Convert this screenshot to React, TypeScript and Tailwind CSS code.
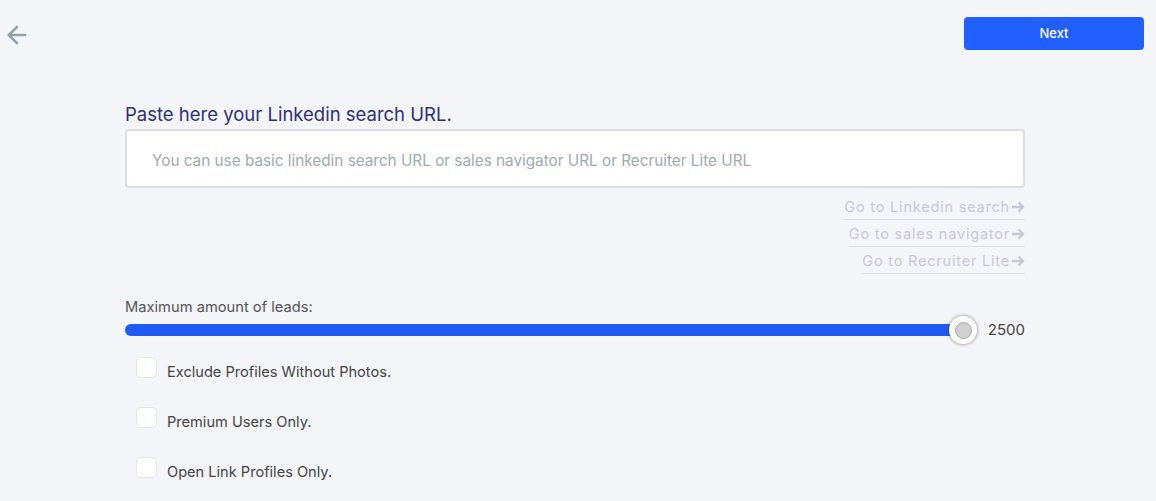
import { ArrowLeft } from "lucide-react";

const LINKS = ["Go to Linkedin search", "Go to sales navigator", "Go to Recruiter Lite"];
const OPTIONS = ["Exclude Profiles Without Photos.", "Premium Users Only.", "Open Link Profiles Only."];

function LinkArrow() {
  return (
    <svg width="14" height="14" viewBox="0 0 14 14" className="ml-[1px]">
      <path d="M1 7h11M7.5 2.5L12 7l-4.5 4.5" fill="none" stroke="currentColor" strokeWidth="2.4" strokeLinecap="butt" />
    </svg>
  );
}

export default function App() {
  const value = 2500;
  const max = 2500;
  const pct = (value / max) * 100;

  return (
    <div className="relative h-[501px] w-full overflow-hidden bg-[#f4f5f9] font-['Inter',sans-serif]">
      <div className="flex items-start justify-between pl-[3px] pr-[12px] pt-[17px]">
        <button type="button" className="mt-[4px] text-[#8fa3a8]" aria-label="Back">
          <ArrowLeft className="h-[28px] w-[28px]" strokeWidth={2.2} />
        </button>
        <button
          type="button"
          className="h-[33px] w-[180px] rounded-[4px] bg-[#2160ff] pt-[1px] text-[13px] font-medium text-white"
        >
          Next
        </button>
      </div>

      <div className="mt-[52px] w-[900px]" style={{ marginLeft: 125 }}>
        <h2 className="text-[18.5px] leading-[24px] text-[#2d3079]">Paste here your Linkedin search URL.</h2>
        <input
          type="text"
          placeholder="You can use basic linkedin search URL or sales navigator URL or Recruiter Lite URL"
          className="mt-[3px] h-[59px] w-full rounded-[4px] border-2 border-[#dcdce8] bg-white px-[25px] pt-[3px] text-[15.3px] text-[#444] outline-none placeholder:text-[#9eabad]"
        />

        <div className="mt-[9px] flex flex-col items-end gap-[4px]">
          {LINKS.map((link) => (
            <a
              key={link}
              href="#"
              className="flex items-center border-b border-[#dfe0ea] pb-[2px] text-[14.5px] leading-[20px] tracking-[0.8px] text-[#c6c8d8]"
            >
              {link}
              <LinkArrow />
            </a>
          ))}
        </div>

        <div className="mt-[24px]">
          <p className="text-[14.7px] leading-[18px] text-[#555]">Maximum amount of leads:</p>
          <div className="mt-[0px] flex items-center">
            <div className="relative h-[28px] flex-1">
              <div className="absolute left-0 right-[24px] top-[8px] h-[12px] rounded-full bg-[#e2e4ee]" />
              <div
                className="absolute left-0 top-[8px] h-[12px] rounded-full bg-[#1f5af6]"
                style={{ width: `calc(${pct}% - 24px)` }}
              />
              <div
                className="absolute top-0 flex h-[28px] w-[28px] items-center justify-center rounded-full bg-white shadow-[0_0_3px_1px_rgba(0,0,0,0.3)]"
                style={{ left: `calc(${pct}% - 38px)` }}
              >
                <div className="h-[17px] w-[17px] rounded-full border border-[#a8a8a8] bg-[#d0d0d0]" />
              </div>
            </div>
            <span className="ml-[-2px] w-[40px] text-right text-[15px] text-[#444]">{value}</span>
          </div>
        </div>

        <div className="mt-[10px] flex flex-col gap-[23px] pl-[11px]">
          {OPTIONS.map((opt) => (
            <label key={opt} className="flex items-center">
              <span className="h-[21px] w-[21px] rounded-[5px] border border-[#e3e3e8] bg-white" />
              <span className="ml-[10px] mt-[9px] text-[14.6px] leading-[18px] text-[#444]">{opt}</span>
            </label>
          ))}
        </div>
      </div>
    </div>
  );
}
